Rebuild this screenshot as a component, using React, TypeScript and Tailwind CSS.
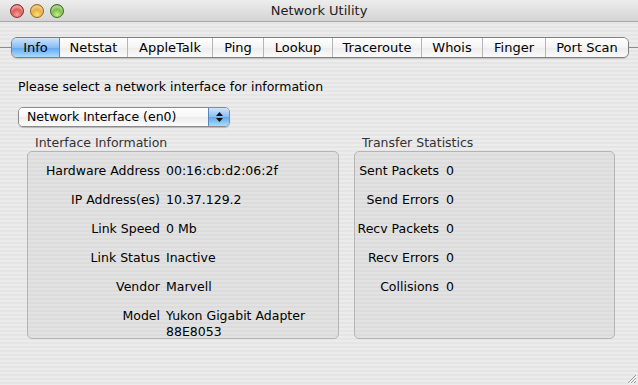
import React from "react";

const tabs = [
  { name: "Info", w: 48 },
  { name: "Netstat", w: 68 },
  { name: "AppleTalk", w: 85 },
  { name: "Ping", w: 51 },
  { name: "Lookup", w: 69 },
  { name: "Traceroute", w: 89 },
  { name: "Whois", w: 61 },
  { name: "Finger", w: 63 },
  { name: "Port Scan", w: 82 },
];

const ifaceRows: [string, string, string?][] = [
  ["Hardware Address", "00:16:cb:d2:06:2f"],
  ["IP Address(es)", "10.37.129.2"],
  ["Link Speed", "0 Mb"],
  ["Link Status", "Inactive"],
  ["Vendor", "Marvell"],
  ["Model", "Yukon Gigabit Adapter", "88E8053"],
];

const statRows: [string, string][] = [
  ["Sent Packets", "0"],
  ["Send Errors", "0"],
  ["Recv Packets", "0"],
  ["Recv Errors", "0"],
  ["Collisions", "0"],
];

function Light({ from, to, border }: { from: string; to: string; border: string }) {
  return (
    <div
      className="w-[14px] h-[14px] rounded-full"
      style={{
        background: `radial-gradient(circle at 50% 80%, ${to} 0%, ${from} 75%)`,
        border: `1px solid ${border}`,
        boxShadow: "inset 0 3px 2px rgba(255,255,255,0.55)",
      }}
    />
  );
}

const groupBg =
  "rounded-[5px] border border-[#b4b4b4] bg-[repeating-linear-gradient(to_bottom,#e2e2e2_0px,#e2e2e2_2px,#dcdcdc_2px,#dcdcdc_4px)]";

export default function App() {
  return (
    <div
      className="w-[638px] h-[385px] relative overflow-hidden text-[12.5px] text-black bg-[repeating-linear-gradient(to_bottom,#ececec_0px,#ececec_2px,#e5e5e5_2px,#e5e5e5_4px)]"
      style={{ fontFamily: '"DejaVu Sans", "Liberation Sans", sans-serif' }}
    >
      {/* Title bar */}
      <div className="h-[22px] relative flex items-center bg-[linear-gradient(to_bottom,#ededed,#d4d4d4)] border-b border-[#a9a9a9]">
        <div className="flex items-center gap-[6px] pl-[10px]">
          <Light from="#c92d2a" to="#f7a19a" border="#8e2a27" />
          <Light from="#d98b13" to="#fbe27c" border="#9c6512" />
          <Light from="#4e9a1d" to="#c6f08a" border="#3a6d17" />
        </div>
        <div className="absolute inset-0 flex items-center justify-center text-[13px] text-[#222]">
          Network Utility
        </div>
      </div>

      {/* Tabs */}
      <div className="flex items-center mt-[15px] h-[21px]">
        <div className="w-[11px] h-px bg-[#8c8c8c]" />
        <div className="flex h-[21px] border border-[#7f7f7f] rounded-[6px] overflow-hidden shadow-[0_1px_1px_rgba(0,0,0,0.15)]">
          {tabs.map((t, i) => (
            <div
              key={t.name}
              className={
                i === 0
                  ? "flex items-center justify-center text-[13px] bg-[linear-gradient(to_bottom,#cfe4fb_0%,#88bdf4_50%,#62a6f0_51%,#a9ddfd_100%)] border-r border-[#5a86b9]"
                  : i === tabs.length - 1
                  ? "flex items-center justify-center text-[13px] bg-[linear-gradient(to_bottom,#ffffff_0%,#f4f4f4_50%,#ececec_51%,#fafafa_100%)]"
                  : "flex items-center justify-center text-[13px] bg-[linear-gradient(to_bottom,#ffffff_0%,#f4f4f4_50%,#ececec_51%,#fafafa_100%)] border-r border-[#b5b5b5]"
              }
              style={{ width: t.w }}
            >
              {t.name}
            </div>
          ))}
        </div>
        <div className="flex-1 h-px bg-[#8c8c8c]" />
      </div>

      {/* Content */}
      <div className="pl-[18px] pr-[23px]">
        <div className="mt-[21px] h-[16px] leading-[16px]">
          Please select a network interface for information
        </div>

        <div className="mt-[12px] w-[212px] h-[20px] flex rounded-[5px] border border-[#8b8b8b] overflow-hidden shadow-[0_1px_1px_rgba(0,0,0,0.2)]">
          <div className="flex-1 flex items-center pl-[8px] bg-[linear-gradient(to_bottom,#ffffff_0%,#f6f6f6_50%,#ececec_51%,#fbfbfb_100%)]">
            Network Interface (en0)
          </div>
          <div className="w-[21px] flex flex-col items-center justify-center gap-[2px] border-l border-[#5a86b9] bg-[linear-gradient(to_bottom,#cfe4fb_0%,#88bdf4_50%,#62a6f0_51%,#a9ddfd_100%)]">
            <svg width="7" height="4" viewBox="0 0 7 4"><path d="M3.5 0 L7 4 L0 4 Z" fill="#111" /></svg>
            <svg width="7" height="4" viewBox="0 0 7 4"><path d="M0 0 L7 0 L3.5 4 Z" fill="#111" /></svg>
          </div>
        </div>

        <div className="flex gap-[15px] mt-[8px] ml-[9px]">
          {/* Interface Information */}
          <div className="w-[312px] flex flex-col">
            <div className="pl-[8px] h-[16px] leading-[16px] text-[#333]">Interface Information</div>
            <div className={`h-[188px] pt-[11px] ${groupBg}`}>
              {ifaceRows.map(([k, v, v2]) => (
                <div key={k} className="flex h-[29px] leading-[16px] whitespace-nowrap">
                  <div className="w-[132px] text-right">{k}</div>
                  <div className="pl-[6px]">
                    <div>{v}</div>
                    {v2 && <div>{v2}</div>}
                  </div>
                </div>
              ))}
            </div>
          </div>

          {/* Transfer Statistics */}
          <div className="w-[261px] flex flex-col">
            <div className="pl-[8px] h-[16px] leading-[16px] text-[#333]">Transfer Statistics</div>
            <div className={`h-[188px] pt-[11px] ${groupBg}`}>
              {statRows.map(([k, v]) => (
                <div key={k} className="flex h-[29px] leading-[16px] whitespace-nowrap">
                  <div className="w-[84px] text-right">{k}</div>
                  <div className="pl-[7px]">{v}</div>
                </div>
              ))}
            </div>
          </div>
        </div>
      </div>

      {/* Resize grip */}
      <svg className="absolute right-[1px] bottom-[1px]" width="12" height="12" viewBox="0 0 12 12">
        <path d="M11 3 L3 11 M11 6 L6 11 M11 9 L9 11" stroke="#999" strokeWidth="1" />
        <path d="M11.8 3.8 L3.8 11.8 M11.8 6.8 L6.8 11.8" stroke="#fff" strokeWidth="0.8" />
      </svg>
    </div>
  );
}
